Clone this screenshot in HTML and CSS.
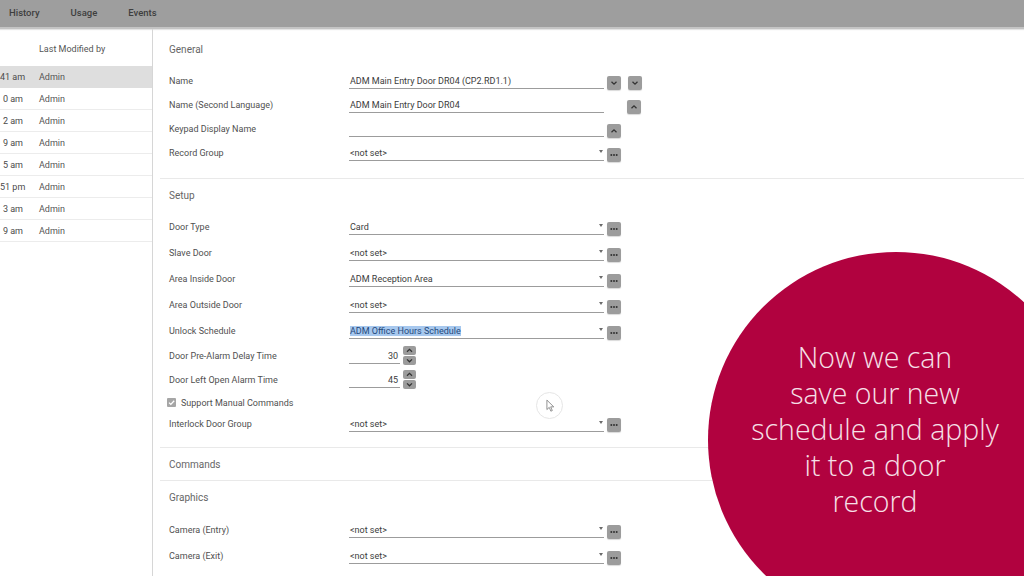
FILE: index.html
```html
<!DOCTYPE html>
<html lang="en">
<head>
    <meta charset="UTF-8">
    <meta name="viewport" content="width=device-width, initial-scale=1.0">
    <title>Door - ADM Main Entry Door DR04</title>
    <link rel="stylesheet" href="styles.css">
</head>
<body>
    <nav class="topbar">
        <span class="tab">History</span>
        <span class="tab">Usage</span>
        <span class="tab">Events</span>
    </nav>

    <div class="main">
        <aside class="history">
            <div class="history-head">
                <span class="time"></span>
                <span class="who">Last Modified by</span>
            </div>
            <div class="history-row selected"><span class="time">41 am</span><span class="who">Admin</span></div>
            <div class="history-row"><span class="time">0 am</span><span class="who">Admin</span></div>
            <div class="history-row"><span class="time">2 am</span><span class="who">Admin</span></div>
            <div class="history-row"><span class="time">9 am</span><span class="who">Admin</span></div>
            <div class="history-row"><span class="time">5 am</span><span class="who">Admin</span></div>
            <div class="history-row"><span class="time">51 pm</span><span class="who">Admin</span></div>
            <div class="history-row"><span class="time">3 am</span><span class="who">Admin</span></div>
            <div class="history-row"><span class="time">9 am</span><span class="who">Admin</span></div>
        </aside>

        <main class="details">
            <section class="group first">
                <h3>General</h3>
                <div class="row">
                    <label>Name</label>
                    <div class="field">ADM Main Entry Door DR04 (CP2.RD1.1)</div>
                    <button class="btn" type="button"><svg viewBox="0 0 14 14"><path d="M4.5 5.8l2.5 2.4 2.5-2.4"/></svg></button>
                    <button class="btn far" type="button"><svg viewBox="0 0 14 14"><path d="M4.5 5.8l2.5 2.4 2.5-2.4"/></svg></button>
                </div>
                <div class="row">
                    <label>Name (Second Language)</label>
                    <div class="field">ADM Main Entry Door DR04</div>
                    <button class="btn skip" type="button"><svg viewBox="0 0 14 14"><path d="M4.5 8.2l2.5-2.4 2.5 2.4"/></svg></button>
                </div>
                <div class="row">
                    <label>Keypad Display Name</label>
                    <div class="field"></div>
                    <button class="btn" type="button"><svg viewBox="0 0 14 14"><path d="M4.5 8.2l2.5-2.4 2.5 2.4"/></svg></button>
                </div>
                <div class="row">
                    <label>Record Group</label>
                    <div class="field select"><span>&lt;not set&gt;</span><i class="caret"></i></div>
                    <button class="btn" type="button"><svg viewBox="0 0 14 14"><circle cx="4.3" cy="7" r="1"/><circle cx="7" cy="7" r="1"/><circle cx="9.7" cy="7" r="1"/></svg></button>
                </div>
            </section>

            <section class="group">
                <h3>Setup</h3>
                <div class="row tall">
                    <label>Door Type</label>
                    <div class="field select"><span>Card</span><i class="caret"></i></div>
                    <button class="btn" type="button"><svg viewBox="0 0 14 14"><circle cx="4.3" cy="7" r="1"/><circle cx="7" cy="7" r="1"/><circle cx="9.7" cy="7" r="1"/></svg></button>
                </div>
                <div class="row tall">
                    <label>Slave Door</label>
                    <div class="field select"><span>&lt;not set&gt;</span><i class="caret"></i></div>
                    <button class="btn" type="button"><svg viewBox="0 0 14 14"><circle cx="4.3" cy="7" r="1"/><circle cx="7" cy="7" r="1"/><circle cx="9.7" cy="7" r="1"/></svg></button>
                </div>
                <div class="row tall">
                    <label>Area Inside Door</label>
                    <div class="field select"><span>ADM Reception Area</span><i class="caret"></i></div>
                    <button class="btn" type="button"><svg viewBox="0 0 14 14"><circle cx="4.3" cy="7" r="1"/><circle cx="7" cy="7" r="1"/><circle cx="9.7" cy="7" r="1"/></svg></button>
                </div>
                <div class="row tall">
                    <label>Area Outside Door</label>
                    <div class="field select"><span>&lt;not set&gt;</span><i class="caret"></i></div>
                    <button class="btn" type="button"><svg viewBox="0 0 14 14"><circle cx="4.3" cy="7" r="1"/><circle cx="7" cy="7" r="1"/><circle cx="9.7" cy="7" r="1"/></svg></button>
                </div>
                <div class="row tall">
                    <label>Unlock Schedule</label>
                    <div class="field select"><span class="picked">ADM Office Hours Schedule</span><i class="caret"></i></div>
                    <button class="btn" type="button"><svg viewBox="0 0 14 14"><circle cx="4.3" cy="7" r="1"/><circle cx="7" cy="7" r="1"/><circle cx="9.7" cy="7" r="1"/></svg></button>
                </div>
                <div class="row">
                    <label>Door Pre-Alarm Delay Time</label>
                    <div class="field number">30</div>
                    <div class="spin">
                        <button class="spin-btn" type="button"><svg viewBox="0 0 13 9"><path d="M4 5.8l2.5-2.4 2.5 2.4"/></svg></button>
                        <button class="spin-btn" type="button"><svg viewBox="0 0 13 9"><path d="M4 3.4l2.5 2.4 2.5-2.4"/></svg></button>
                    </div>
                </div>
                <div class="row">
                    <label>Door Left Open Alarm Time</label>
                    <div class="field number">45</div>
                    <div class="spin">
                        <button class="spin-btn" type="button"><svg viewBox="0 0 13 9"><path d="M4 5.8l2.5-2.4 2.5 2.4"/></svg></button>
                        <button class="spin-btn" type="button"><svg viewBox="0 0 13 9"><path d="M4 3.4l2.5 2.4 2.5-2.4"/></svg></button>
                    </div>
                </div>
                <div class="row short">
                    <span class="check"><svg viewBox="0 0 9 9"><path d="M2 4.6l1.8 1.8L7.2 2.8"/></svg></span>
                    <span class="check-label">Support Manual Commands</span>
                </div>
                <div class="row short">
                    <label>Interlock Door Group</label>
                    <div class="field select"><span>&lt;not set&gt;</span><i class="caret"></i></div>
                    <button class="btn" type="button"><svg viewBox="0 0 14 14"><circle cx="4.3" cy="7" r="1"/><circle cx="7" cy="7" r="1"/><circle cx="9.7" cy="7" r="1"/></svg></button>
                </div>
            </section>

            <section class="group closed">
                <h3>Commands</h3>
            </section>

            <section class="group last">
                <h3>Graphics</h3>
                <div class="row tall">
                    <label>Camera (Entry)</label>
                    <div class="field select"><span>&lt;not set&gt;</span><i class="caret"></i></div>
                    <button class="btn" type="button"><svg viewBox="0 0 14 14"><circle cx="4.3" cy="7" r="1"/><circle cx="7" cy="7" r="1"/><circle cx="9.7" cy="7" r="1"/></svg></button>
                </div>
                <div class="row tall">
                    <label>Camera (Exit)</label>
                    <div class="field select"><span>&lt;not set&gt;</span><i class="caret"></i></div>
                    <button class="btn" type="button"><svg viewBox="0 0 14 14"><circle cx="4.3" cy="7" r="1"/><circle cx="7" cy="7" r="1"/><circle cx="9.7" cy="7" r="1"/></svg></button>
                </div>
            </section>
        </main>
    </div>

    <!-- mouse pointer with click ring -->
    <div class="pointer">
        <svg viewBox="0 0 10 14"><path d="M1 1v10.5l2.6-2.4 1.8 4.2 1.6-.7-1.8-4.1H8.6z"/></svg>
    </div>

    <!-- caption bubble -->
    <div class="bubble">
        <p>Now we can<br>save our new<br>schedule and apply<br>it to a door<br>record</p>
    </div>
</body>
</html>
```

FILE: styles.css
```css
* {
    box-sizing: border-box;
}

html,
body {
    margin: 0;
    width: 1024px;
    height: 576px;
    overflow: hidden;
}

body {
    position: relative;
    background: #fff;
    font-family: Roboto, "Liberation Sans", sans-serif;
    font-size: 9px;
    color: #4a4a4a;
}

.topbar {
    display: flex;
    height: 29px;
    padding-left: 9px;
    background: #9e9e9e;
    border-bottom: 2px solid #c4c4c4;
    box-shadow: 0 1px 1px #e4e4e4;
}

.tab {
    margin-right: 31px;
    line-height: 25px;
    font-weight: 500;
    font-size: 9.5px;
    color: #3e3e3e;
}

.main {
    display: flex;
    height: 547px;
}

/* history list on the left */
.history {
    width: 153px;
    flex: none;
    border-right: 1px solid #d6d6d6;
}

.history-head {
    display: flex;
    align-items: center;
    height: 37px;
    padding-top: 3px;
}

.history-row {
    display: flex;
    align-items: center;
    height: 22px;
    border-bottom: 1px solid #ececec;
}

.history-row.selected {
    background: #dedede;
    border-bottom-color: #dedede;
}

.time {
    width: 23px;
    margin-right: 16px;
    text-align: right;
    white-space: nowrap;
}

.who {
    color: #555;
}

/* detail form */
.details {
    flex: 1;
    padding-left: 7px;
}

.group {
    padding: 10px 0 13px 9px;
    border-bottom: 1px solid #e9e9e9;
}

.group.first {
    padding-top: 14px;
    padding-bottom: 13px;
}

.group.closed {
    padding-bottom: 8px;
}

.group.last {
    border-bottom: none;
}

.group h3 {
    margin: 0 0 11px;
    height: 14px;
    line-height: 14px;
    font-size: 10px;
    font-weight: 400;
    color: #666;
}

.group.first h3,
.group.last h3 {
    margin-bottom: 12px;
}

.group.closed h3 {
    margin-bottom: 0;
}

.row {
    display: flex;
    align-items: center;
    height: 24px;
}

.row.tall {
    height: 26px;
}

.row.short {
    height: 21px;
}

.row label {
    width: 180px;
    flex: none;
    color: #505050;
}

.field {
    display: flex;
    align-items: center;
    width: 255px;
    height: 15px;
    margin-top: 1px;
    border-bottom: 1px solid #9c9c9c;
    padding-left: 1px;
    color: #3c3c3c;
    white-space: nowrap;
}

.field.number {
    width: 51px;
    justify-content: flex-end;
    padding-right: 2px;
}

.picked {
    background: #a7c8ee;
    color: #24487c;
}

.caret {
    width: 0;
    height: 0;
    margin: 0 1px 3px auto;
    border-top: 3px solid #6a6a6a;
    border-left: 2.5px solid transparent;
    border-right: 2.5px solid transparent;
}

.btn {
    display: block;
    width: 14px;
    height: 14px;
    margin: 3px 0 0 3px;
    padding: 0;
    border: none;
    border-radius: 2px;
    background: #9c9c9c;
    box-shadow: 0 1px 1px rgba(0, 0, 0, 0.15);
}

.btn.far {
    margin-left: 7px;
}

.btn.skip {
    margin-left: 23px;
}

.btn svg,
.spin-btn svg {
    display: block;
    width: 100%;
    height: 100%;
}

.btn path,
.spin-btn path {
    fill: none;
    stroke: #333;
    stroke-width: 1.3;
}

.btn circle {
    fill: #333;
}

.spin {
    display: flex;
    flex-direction: column;
    gap: 1px;
    margin: -2px 0 0 3px;
}

.spin-btn {
    display: block;
    width: 13px;
    height: 9px;
    padding: 0;
    border: none;
    border-radius: 2px;
    background: #9c9c9c;
}

.check {
    width: 9px;
    height: 9px;
    margin: 0 5px 0 -2px;
    border-radius: 1px;
    background: #a6a6a6;
}

.check svg {
    display: block;
    width: 9px;
    height: 9px;
}

.check path {
    fill: none;
    stroke: #fff;
    stroke-width: 1.3;
}

.check-label {
    color: #505050;
}

/* overlays */
.pointer {
    position: absolute;
    left: 536px;
    top: 392px;
    width: 27px;
    height: 27px;
    border: 1px solid #e6e6e6;
    border-radius: 50%;
}

.pointer svg {
    position: absolute;
    left: 9px;
    top: 6px;
    width: 9px;
    height: 13px;
}

.pointer path {
    fill: #fff;
    stroke: #6a6a6a;
    stroke-width: 0.8;
}

.bubble {
    position: absolute;
    left: 708px;
    top: 252px;
    width: 376px;
    height: 376px;
    border-radius: 50%;
    background: #b1023f;
    padding-top: 87px;
}

.bubble p {
    width: 334px;
    margin: 0;
    text-align: center;
    font-family: "Open Sans", "Liberation Sans", sans-serif;
    font-weight: 300;
    font-size: 28.5px;
    line-height: 36px;
    color: #f6e0e8;
}
```
